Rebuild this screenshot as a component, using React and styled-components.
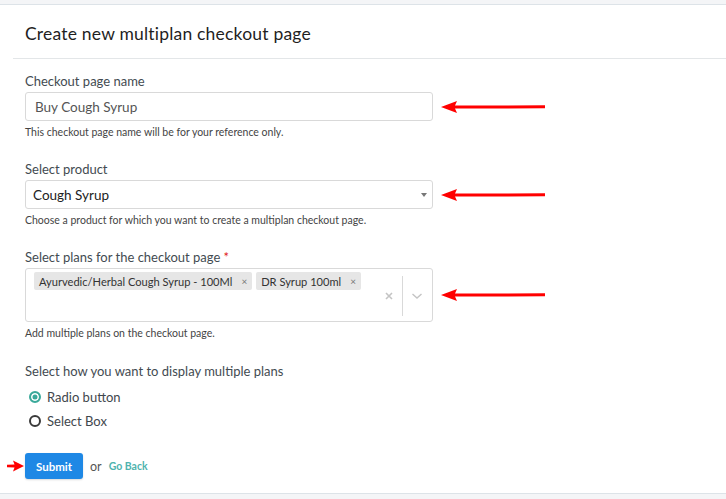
import styled, { createGlobalStyle } from "styled-components";

const GlobalStyle = createGlobalStyle`
  body {
    margin: 0;
    background: #f4f5f7;
    font-family: "Lato", "Open Sans", sans-serif;
  }
`;

const Page = styled.div`
  padding-top: 4px;
  height: 499px;
  box-sizing: border-box;
`;

const Card = styled.div`
  background: #fff;
  border-top: 1px solid #dde3e8;
  border-bottom: 1px solid #dde3e8;
  height: 490px;
  box-sizing: border-box;
`;

const Header = styled.div`
  margin-left: 13px;
  padding: 0 12px;
  height: 53px;
  display: flex;
  align-items: center;
  border-bottom: 1px solid #e3e6e8;
`;

const Title = styled.h1`
  margin: 4px 0 0;
  font-size: 17.5px;
  font-weight: 400;
  color: #1f1f1f;
  letter-spacing: 0.2px;
`;

const Body = styled.div`
  padding: 0 25px;
`;

const Label = styled.div`
  margin-top: ${(p) => p.$top}px;
  font-size: 13px;
  line-height: 16px;
  color: #434b51;
`;

const Req = styled.span`
  color: #e02020;
`;

const FieldRow = styled.div`
  margin-top: 3px;
  display: flex;
  align-items: center;
  gap: 8px;
`;

const Input = styled.div`
  width: 408px;
  height: 29px;
  box-sizing: border-box;
  border: 1px solid #d9d9d9;
  border-radius: 3px;
  display: flex;
  align-items: center;
  padding: 0 5px 0 ${(p) => p.$pad || 9}px;
  font-size: 13.5px;
  color: ${(p) => p.$color || "#555"};
`;

const Caret = styled.span`
  margin-left: auto;
  width: 0;
  height: 0;
  border-left: 3px solid transparent;
  border-right: 3px solid transparent;
  border-top: 4px solid #777;
`;

const Multi = styled.div`
  width: 408px;
  height: 54px;
  box-sizing: border-box;
  border: 1px solid #d9d9d9;
  border-radius: 3px;
  display: flex;
`;

const Tags = styled.div`
  flex: 1;
  display: flex;
  align-items: flex-start;
  gap: 4px;
  padding: 3px 8px;
`;

const Tag = styled.div`
  height: 18px;
  background: #e6e6e6;
  border-radius: 2px;
  display: flex;
  align-items: center;
  padding: 0 5px;
  font-size: 11.1px;
  color: #333;
  gap: 9px;
`;

const TagX = styled.span`
  font-size: 10px;
  color: #777;
`;

const Indicators = styled.div`
  display: flex;
  align-items: center;
  padding-top: 2px;
  padding-right: 7px;
`;

const Sep = styled.div`
  width: 1px;
  height: 40px;
  background: #d9d9d9;
  margin: 0 6px 0 5px;
`;

const IconBox = styled.div`
  width: 16px;
  display: flex;
  justify-content: center;
`;

const Help = styled.div`
  margin-top: 5px;
  font-size: 10.5px;
  line-height: 12px;
  color: #444;
`;

const RadioRow = styled.label`
  display: flex;
  align-items: center;
  gap: 6px;
  height: 24px;
  margin-top: ${(p) => p.$top || 0}px;
  padding-left: 4px;
  font-size: 13px;
  color: #3f474d;
`;

const Dot = styled.span`
  width: 12px;
  height: 12px;
  box-sizing: border-box;
  border-radius: 50%;
  border: 2px solid ${(p) => (p.$on ? "#3aa99a" : "#3a3a3a")};
  background: ${(p) => (p.$on ? "#3aa99a" : "#fff")};
  box-shadow: ${(p) => (p.$on ? "inset 0 0 0 1.5px #fff" : "none")};
`;

const Actions = styled.div`
  margin-top: 20px;
  display: flex;
  align-items: center;
  gap: 7px;
  position: relative;
`;

const Button = styled.button`
  height: 26px;
  width: 58px;
  border: none;
  border-radius: 3px;
  background: #1e88e5;
  color: #fff;
  font-family: inherit;
  font-weight: 700;
  font-size: 11.5px;
  box-shadow: 0 1px 2px rgba(0, 0, 0, 0.15);
`;

const Or = styled.span`
  font-size: 12.5px;
  color: #555;
`;

const Back = styled.a`
  font-size: 10.5px;
  font-weight: 700;
  color: #4fb3ae;
`;

const SubmitArrow = styled.svg`
  position: absolute;
  left: -18px;
  top: 7px;
`;

const Arrow = () => (
  <svg width="106" height="14" viewBox="0 0 106 14">
    <path d="M0 7 L16 1 L14 5.5 L104 5.3 L104 8.3 L14 8.5 L16 13 Z" fill="#f00" />
  </svg>
);

const X = () => (
  <svg width="10" height="10" viewBox="0 0 10 10">
    <path d="M2 2 L8 8 M8 2 L2 8" stroke="#c4c4c4" strokeWidth="1.6" />
  </svg>
);

const Chevron = () => (
  <svg width="12" height="8" viewBox="0 0 12 8">
    <path d="M1.5 2 L6 6 L10.5 2" stroke="#c4c4c4" strokeWidth="1.4" fill="none" />
  </svg>
);

export default function App() {
  return (
    <>
      <GlobalStyle />
      <Page>
        <Card>
          <Header>
            <Title>Create new multiplan checkout page</Title>
          </Header>
          <Body>
            <Label $top={14}>Checkout page name</Label>
            <FieldRow>
              <Input>Buy Cough Syrup</Input>
              <Arrow />
            </FieldRow>
            <Help>This checkout page name will be for your reference only.</Help>

            <Label $top={23}>Select product</Label>
            <FieldRow>
              <Input $color="#222" $pad={7}>
                Cough Syrup
                <Caret />
              </Input>
              <Arrow />
            </FieldRow>
            <Help>Choose a product for which you want to create a multiplan checkout page.</Help>

            <Label $top={23}>
              Select plans for the checkout page <Req>*</Req>
            </Label>
            <FieldRow>
              <Multi>
                <Tags>
                  <Tag>
                    Ayurvedic/Herbal Cough Syrup - 100Ml <TagX>×</TagX>
                  </Tag>
                  <Tag>
                    DR Syrup 100ml <TagX>×</TagX>
                  </Tag>
                </Tags>
                <Indicators>
                  <IconBox>
                    <X />
                  </IconBox>
                  <Sep />
                  <IconBox>
                    <Chevron />
                  </IconBox>
                </Indicators>
              </Multi>
              <Arrow />
            </FieldRow>
            <Help>Add multiple plans on the checkout page.</Help>

            <Label $top={24}>Select how you want to display multiple plans</Label>
            <RadioRow $top={6}>
              <Dot $on />
              Radio button
            </RadioRow>
            <RadioRow>
              <Dot />
              Select Box
            </RadioRow>

            <Actions>
              <SubmitArrow width="18" height="12" viewBox="0 0 18 12">
                <path d="M17 6 L6 0.5 L7.5 4.5 L0 4.7 L0 7.3 L7.5 7.5 L6 11.5 Z" fill="#f00" />
              </SubmitArrow>
              <Button>Submit</Button>
              <Or>or</Or>
              <Back>Go Back</Back>
            </Actions>
          </Body>
        </Card>
      </Page>
    </>
  );
}
